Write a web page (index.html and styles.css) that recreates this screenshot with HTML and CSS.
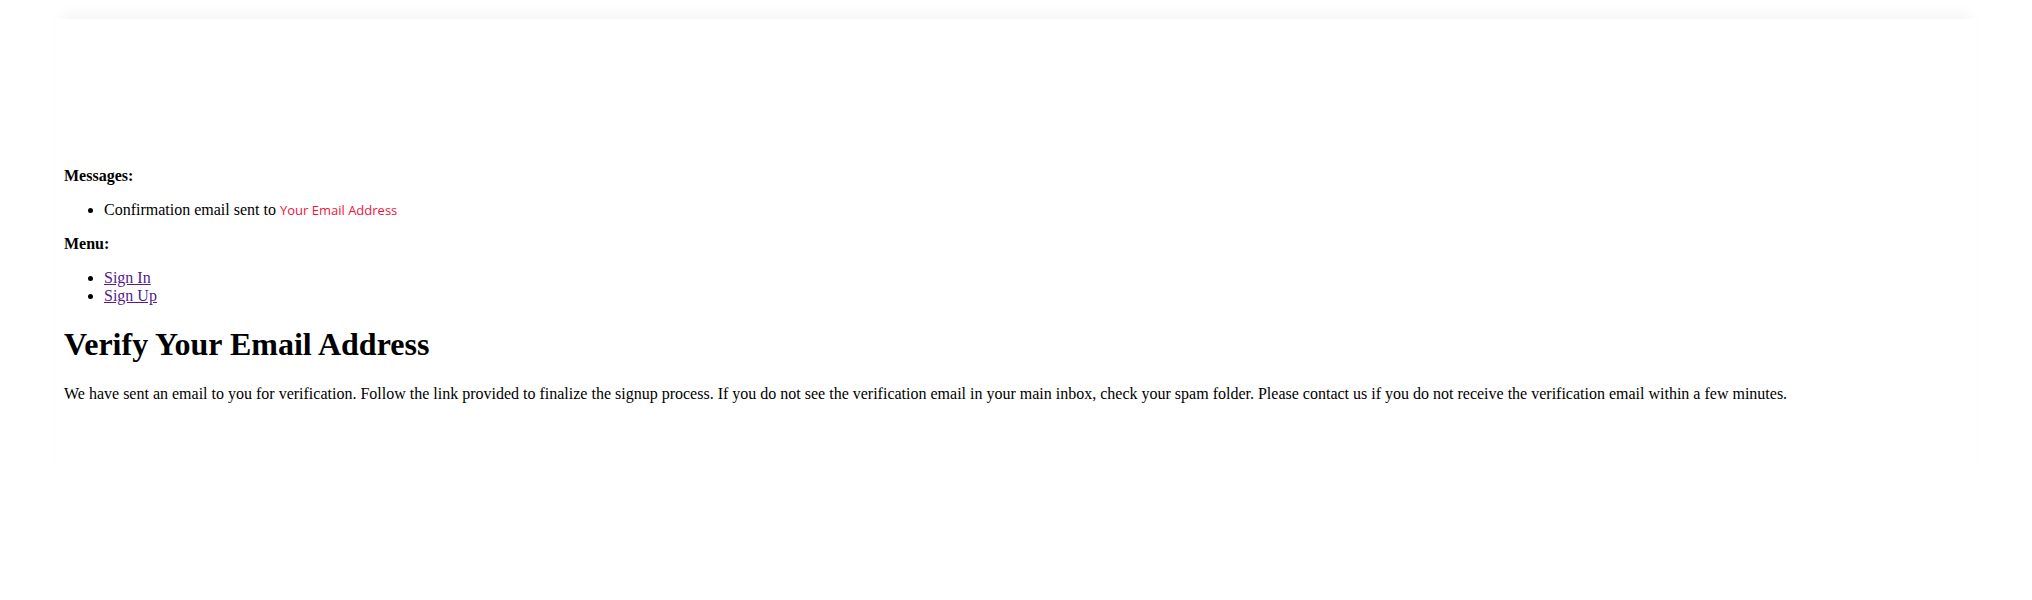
FILE: index.html
```html
<!DOCTYPE html>
<html>
<head>
<meta charset="utf-8">
<title>Verify Your Email Address</title>
<link rel="stylesheet" href="styles.css">
</head>
<body>
<div class="page">
  <p class="label"><b>Messages:</b></p>
  <ul class="list">
    <li>Confirmation email sent to <span class="email">Your Email Address</span></li>
  </ul>
  <p class="label"><b>Menu:</b></p>
  <ul class="list">
    <li><a class="link" href="#signin">Sign In</a></li>
    <li><a class="link" href="#signup">Sign Up</a></li>
  </ul>
  <h1 class="title">Verify Your Email Address</h1>
  <p class="text">We have sent an email to you for verification. Follow the link provided to finalize the signup process. If you do not see the verification email in your main inbox, check your spam folder. Please contact us if you do not receive the verification email within a few minutes.</p>
</div>
</body>
</html>
```

FILE: styles.css
```css
html, body {
  margin: 0;
  padding: 0;
  background: #fff;
}
body {
  font-family: "Liberation Serif", "Times New Roman", serif;
  font-size: 16px;
  color: #000;
}
.page {
  margin: 19px 56px 0;
  padding: 132px 8px 40px;
  background: #fff;
  box-shadow: 0 -12px 12px -6px rgba(0, 0, 0, 0.04);
  min-height: 300px;
}
.label {
  margin: 16px 0;
}
.list {
  margin: 16px 0;
  padding-left: 40px;
}
.email {
  font-family: "Open Sans", "Noto Sans", sans-serif;
  font-size: 13px;
  color: #f0143c;
}
.link {
  color: #551a8b;
}
.title {
  font-size: 32px;
  font-weight: bold;
  margin: 21.44px 0;
}
.text {
  margin: 16px 0;
}
```
